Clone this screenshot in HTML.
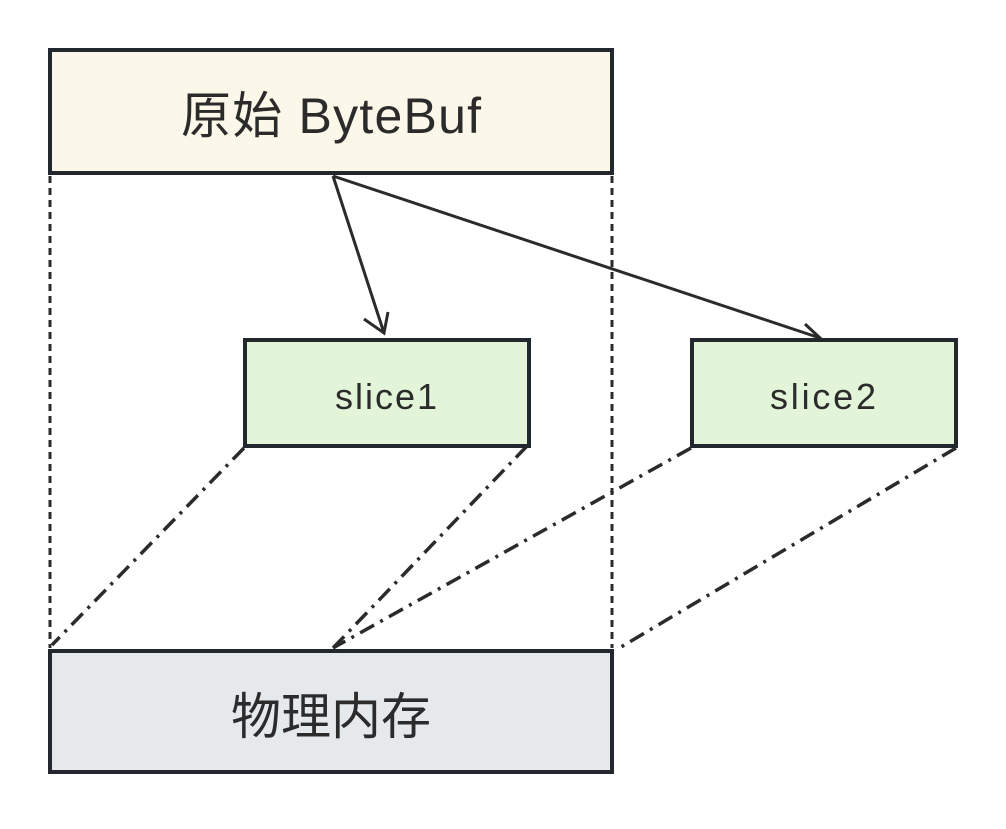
<!DOCTYPE html>
<html><head><meta charset="utf-8"><style>
body{margin:0;background:#fff;width:1006px;height:824px;overflow:hidden}
text{font-family:"Liberation Sans","Noto Sans CJK SC",sans-serif;fill:#2b2b2b}
</style></head><body>
<svg width="1006" height="824" viewBox="0 0 1006 824">
<g stroke="#2b2b2b" stroke-width="3" fill="none">
<line x1="50" y1="176" x2="50" y2="648" stroke-dasharray="7,5"/>
<line x1="612" y1="176" x2="612" y2="648" stroke-dasharray="7,5"/>
<g stroke-dasharray="16,7,3,7" stroke-width="3.5">
<line x1="244" y1="448" x2="52" y2="645"/>
<line x1="527" y1="446" x2="333" y2="648"/>
<line x1="691" y1="448" x2="333" y2="648"/>
<line x1="956" y1="448" x2="616" y2="650"/>
</g>
<line x1="333" y1="176" x2="384" y2="333"/>
<path d="M364 319 L384 333 L388 312"/>
<line x1="333" y1="176" x2="820" y2="338"/>
<path d="M798 348 L820 338 L805 324"/>
</g>
<g stroke="#22282e" stroke-width="4">
<rect x="50" y="50" width="562" height="123" fill="#fcf8e9"/>
<rect x="245" y="340" width="284" height="106" fill="#e3f5d9"/>
<rect x="692" y="340" width="264" height="106" fill="#e3f5d9"/>
<rect x="50" y="651" width="562" height="121" fill="#e6e9ec"/>
</g>
<text x="331" y="133" font-size="50" text-anchor="middle" textLength="300">原始 ByteBuf</text>
<text x="386" y="409" font-size="36" text-anchor="middle" textLength="102">slice1</text>
<text x="823" y="409" font-size="36" text-anchor="middle" textLength="106">slice2</text>
<text x="331" y="734" font-size="50" text-anchor="middle">物理内存</text>
</svg>
</body></html>
